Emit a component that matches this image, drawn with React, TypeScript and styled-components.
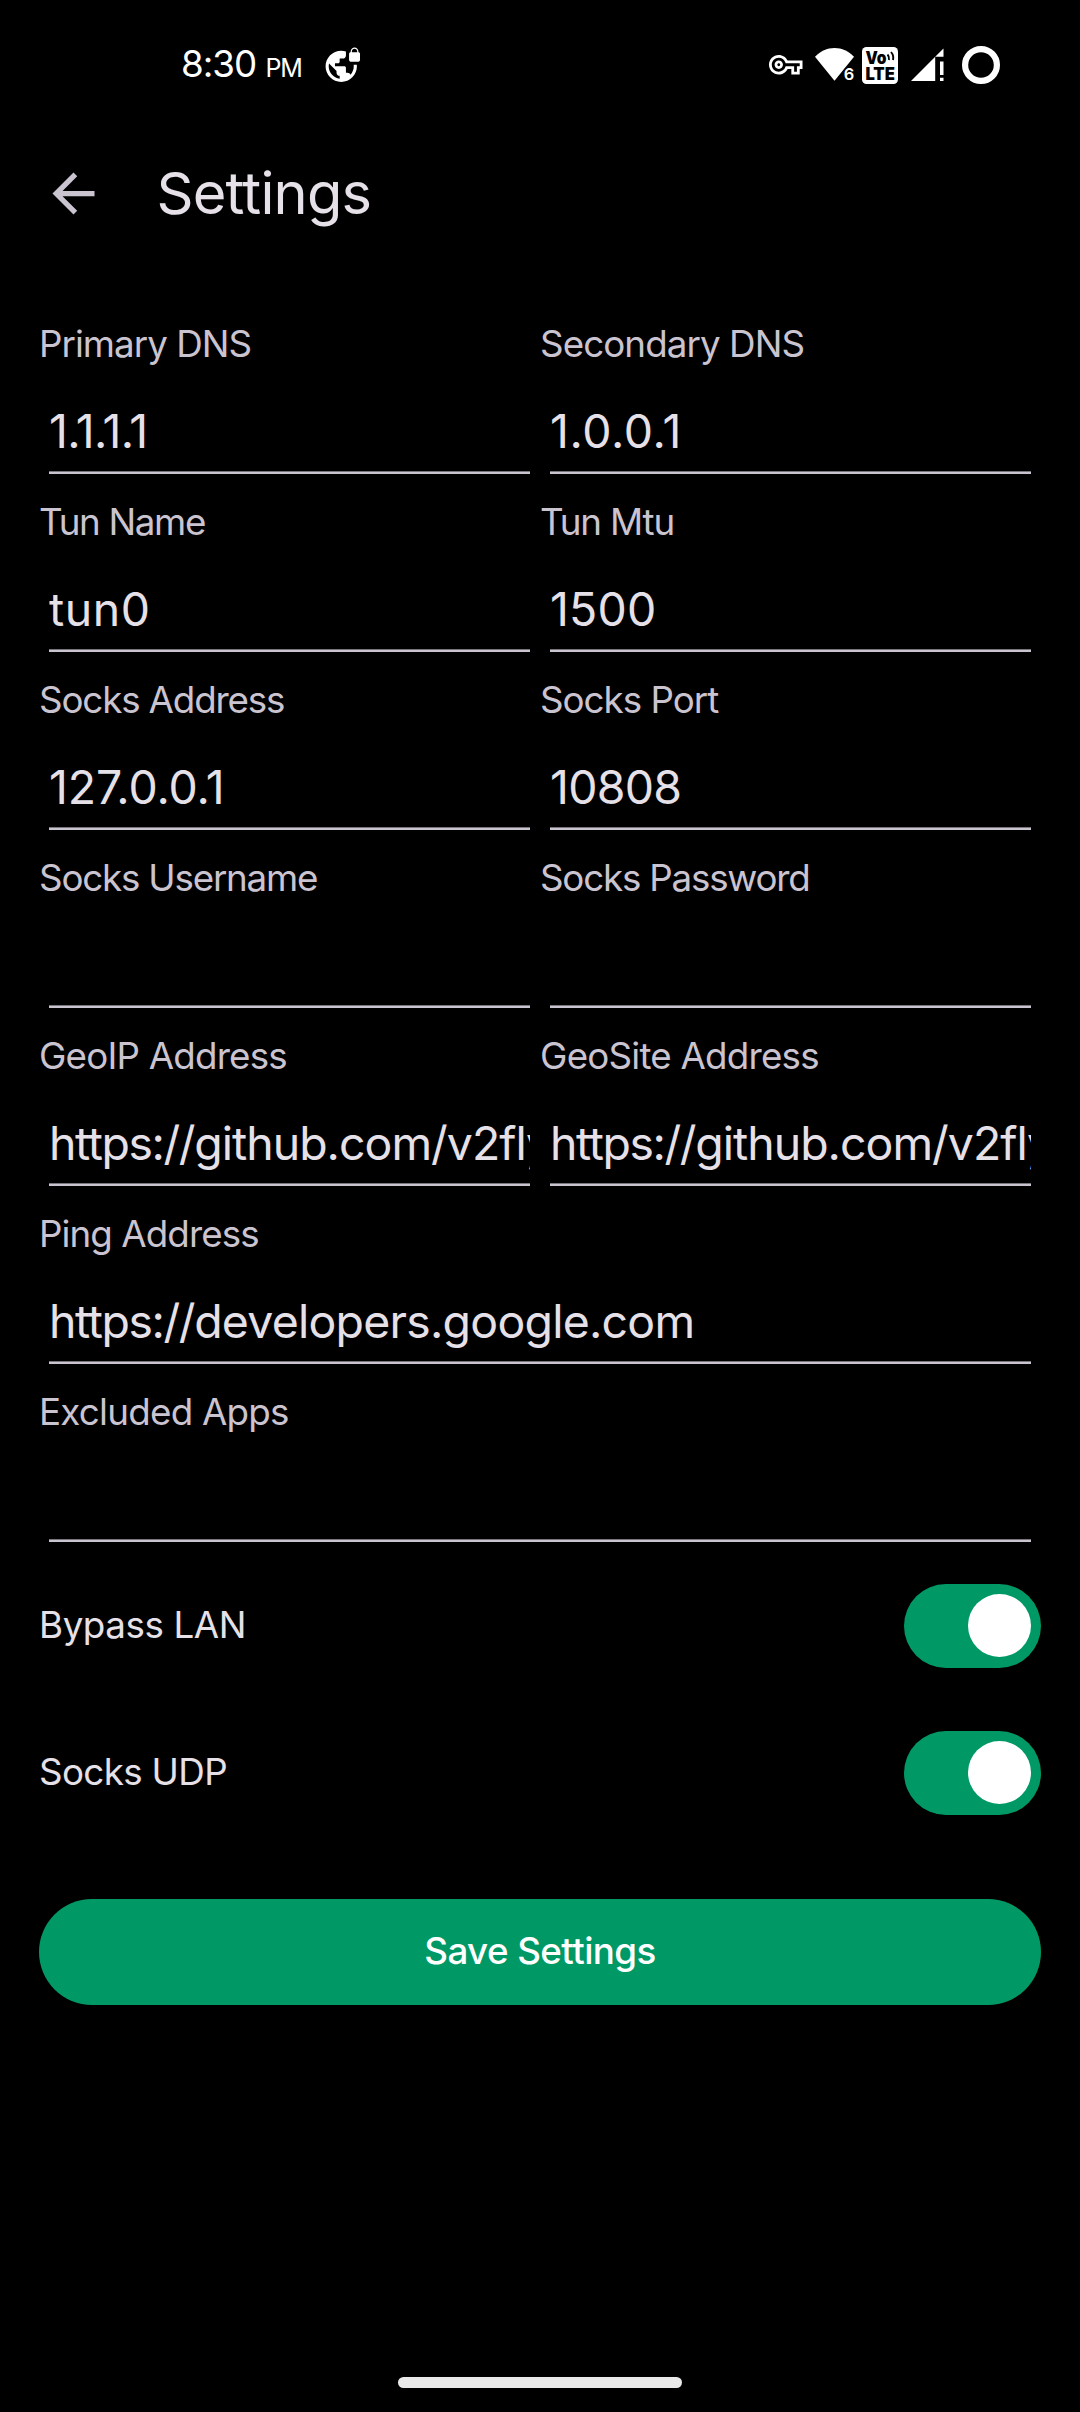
import React, { useState } from "react";
import styled, { createGlobalStyle } from "styled-components";

const GlobalStyle = createGlobalStyle`
  *, *::before, *::after { box-sizing: border-box; }
  body { margin: 0; background: #000; }
`;

const Screen = styled.div`
  display: flex;
  flex-direction: column;
  width: 1080px;
  height: 2412px;
  background: #000;
  color: #e6e0e9;
  font-family: Inter, Roboto, sans-serif;
  overflow: hidden;
`;

const StatusBar = styled.header`
  display: flex;
  align-items: center;
  justify-content: space-between;
  height: 130px;
  padding: 0 80px 0 181px;
  color: #fff;
`;

const StatusGroup = styled.div`
  display: flex;
  align-items: center;
`;

const Clock = styled.div`
  display: flex;
  align-items: baseline;
  padding-top: 2px;
  line-height: 44px;
  white-space: nowrap;
`;

const Time = styled.span`
  width: 84.5px;
  font-size: 36.75px;
  letter-spacing: -1px;
`;

const Meridiem = styled.span`
  width: 58px;
  font-size: 25px;
  letter-spacing: -1.3px;
`;

const Glyph = styled.svg<{ $gap?: number }>`
  display: block;
  flex: none;
  fill: currentColor;
  margin-left: ${p => p.$gap ?? 0}px;
`;

const AppBar = styled.div`
  display: flex;
  align-items: center;
  height: 126px;
  padding-left: 42px;
`;

const BackButton = styled.button`
  display: flex;
  padding: 0;
  border: 0;
  background: none;
  color: #cac4d0;
`;

const Title = styled.h1`
  margin: 0 0 1px 51.5px;
  font-size: 57.75px;
  line-height: 70px;
  font-weight: 400;
  letter-spacing: -0.8px;
`;

const Form = styled.main`
  display: flex;
  flex-direction: column;
  flex: 1;
  padding: 63px 39px 0;
`;

const FieldGrid = styled.div`
  display: grid;
  grid-template-columns: 1fr 1fr;
  grid-auto-rows: 178px;
`;

const FieldBox = styled.div<{ $wide?: boolean }>`
  display: flex;
  flex-direction: column;
  min-width: 0;
  grid-column: ${p => (p.$wide ? "1 / -1" : "auto")};
`;

const Label = styled.div<{ $track: number }>`
  height: 50px;
  font-size: 36.75px;
  line-height: 49px;
  letter-spacing: ${p => p.$track - 0.06}px;
  color: #cac4d0;
  white-space: nowrap;
`;

const Value = styled.div<{ $track: number }>`
  height: 72px;
  margin: 30px 10px 0;
  font-size: 46.4px;
  line-height: 64px;
  letter-spacing: ${p => p.$track}px;
  white-space: nowrap;
  overflow: hidden;
`;

const Scheme = styled.span`
  letter-spacing: -1.4px;
`;

const Underline = styled.div`
  height: 3px;
  margin: 0 10px;
  background: linear-gradient(#79757d 33%, #cac4d0 34%);
`;

const Toggles = styled.div`
  display: flex;
  flex-direction: column;
  gap: 63px;
  margin-top: 19px;
`;

const ToggleRow = styled.div`
  display: flex;
  align-items: center;
  justify-content: space-between;
  height: 84px;
`;

const ToggleLabel = styled.span<{ $track: number }>`
  margin-bottom: 3px;
  font-size: 36.75px;
  line-height: 50px;
  letter-spacing: ${p => p.$track}px;
`;

const Switch = styled.button<{ $on: boolean }>`
  display: flex;
  align-items: center;
  justify-content: ${p => (p.$on ? "flex-end" : "flex-start")};
  width: 137px;
  height: 84px;
  padding: 0 10.5px;
  border: 0;
  border-radius: 42px;
  background: ${p => (p.$on ? "#009966" : "#49454f")};
`;

const Knob = styled.span`
  width: 63px;
  height: 63px;
  margin-bottom: 1px;
  border-radius: 50%;
  background: #fff;
`;

const SaveButton = styled.button`
  height: 106px;
  margin-top: 84px;
  padding: 0 0 3px;
  border: 0;
  border-radius: 53px;
  background: #009966;
  color: #fff;
  font-family: inherit;
  font-size: 36.75px;
  font-weight: 500;
  line-height: 50px;
  letter-spacing: -0.58px;
`;

const HomeBar = styled.div`
  width: 284px;
  height: 10.5px;
  margin: 0 auto 24.5px;
  border-radius: 6px;
  background: #e9e9e9;
`;

type FieldProps = { label: string; value: string; labelTrack: number; valueTrack?: number; wide?: boolean };

const fields: FieldProps[] = [
  { label: "Primary DNS", labelTrack: -0.92, value: "1.1.1.1", valueTrack: -0.73 },
  { label: "Secondary DNS", labelTrack: -0.86, value: "1.0.0.1", valueTrack: 0.62 },
  { label: "Tun Name", labelTrack: -1.28, value: "tun0", valueTrack: 0.6 },
  { label: "Tun Mtu", labelTrack: -1.13, value: "1500", valueTrack: 0.22 },
  { label: "Socks Address", labelTrack: -1.09, value: "127.0.0.1", valueTrack: -0.1 },
  { label: "Socks Port", labelTrack: -0.95, value: "10808", valueTrack: -0.7 },
  { label: "Socks Username", labelTrack: -1.14, value: "" },
  { label: "Socks Password", labelTrack: -1.15, value: "" },
  { label: "GeoIP Address", labelTrack: -0.75, value: "https://github.com/v2fly", valueTrack: -0.95 },
  { label: "GeoSite Address", labelTrack: -0.73, value: "https://github.com/v2fly", valueTrack: -0.95 },
  { label: "Ping Address", labelTrack: -0.87, value: "https://developers.google.com", valueTrack: -0.74, wide: true },
  { label: "Excluded Apps", labelTrack: -0.69, value: "", wide: true },
];

const SCHEME = "https://";

function Field({ label, value, labelTrack, valueTrack = 0, wide }: FieldProps) {
  const isUrl = value.startsWith(SCHEME);
  return (
    <FieldBox $wide={wide}>
      <Label $track={labelTrack}>{label}</Label>
      <Value $track={valueTrack}>
        {isUrl && <Scheme>{SCHEME}</Scheme>}
        {isUrl ? value.slice(SCHEME.length) : value}
      </Value>
      <Underline />
    </FieldBox>
  );
}

function Toggle({ label, track }: { label: string; track: number }) {
  const [on, setOn] = useState(true);
  return (
    <ToggleRow>
      <ToggleLabel $track={track}>{label}</ToggleLabel>
      <Switch $on={on} role="switch" aria-checked={on} aria-label={label} onClick={() => setOn(!on)}>
        <Knob />
      </Switch>
    </ToggleRow>
  );
}

function StatusIcons() {
  return (
    <StatusGroup>
      <Glyph width="33.5" height="33.5" viewBox="0 0 24 24">
        <path d="M22 19h-6v-4h-2.68c-1.14 2.42-3.6 4-6.32 4-3.86 0-7-3.14-7-7s3.14-7 7-7c2.72 0 5.17 1.58 6.32 4H24v6h-2v4zm-4-2h2v-4h2v-2H11.94l-.23-.67C11.01 8.34 9.11 7 7 7c-2.76 0-5 2.24-5 5s2.24 5 5 5c2.11 0 4.01-1.34 4.71-3.33l.23-.67H18v4zM7 15c-1.65 0-3-1.35-3-3s1.35-3 3-3 3 1.35 3 3-1.35 3-3 3zm0-4c-.55 0-1 .45-1 1s.45 1 1 1 1-.45 1-1-.45-1-1-1z" />
      </Glyph>
      <Glyph $gap={12.5} width="40" height="36" viewBox="0 0 40 36">
        <path d="M0 9.8C5.5 4.2 12 1 19.5 1S33.5 4.2 39 9.8L19.5 33.8Z" />
        <text
          x="28.7"
          y="33.2"
          fontSize="16.5"
          fontWeight="600"
          stroke="#000"
          strokeWidth="3"
          paintOrder="stroke"
          textLength="10.5"
          lengthAdjust="spacingAndGlyphs"
        >
          6
        </text>
      </Glyph>
      <Glyph $gap={7} width="36" height="37" viewBox="0 0 36 37">
        <rect width="36" height="37" rx="4.5" />
        <g fill="#000" fontWeight="900">
          <text x="3.6" y="17" fontSize="17" textLength="21" lengthAdjust="spacingAndGlyphs">Vo</text>
          <text x="3.4" y="33.3" fontSize="17.5" textLength="29.5" lengthAdjust="spacingAndGlyphs">LTE</text>
        </g>
        <path d="M25.5 7.5Q27.5 9.500 27 13M29 5Q32 8.500 31 13" fill="none" stroke="#000" strokeWidth="1.9" />
      </Glyph>
      <Glyph $gap={12.5} width="33" height="34" viewBox="0 0 33 34">
        <path d="M0 33L24.200 8.800V33ZM24.200 8.800L32.500 .5V8.800ZM29 13.500H32.500V27H29ZM29 29.700H32.500V33H29Z" />
      </Glyph>
      <Glyph $gap={18.5} width="38" height="38" viewBox="0 0 38 38">
        <circle cx="19" cy="19" r="15.9" fill="none" stroke="currentColor" strokeWidth="6.2" />
      </Glyph>
    </StatusGroup>
  );
}

export default function App() {
  return (
    <Screen>
      <GlobalStyle />
      <StatusBar>
        <StatusGroup>
          <Clock>
            <Time>8:30</Time>
            <Meridiem>PM</Meridiem>
          </Clock>
          <Glyph width="37.6" height="37.6" viewBox="0 0 24 24">
            <path d="M22 4v-.5C22 2.12 20.88 1 19.5 1S17 2.12 17 3.5V4c-.55 0-1 .45-1 1v4c0 .55.45 1 1 1h5c.55 0 1-.45 1-1V5c0-.55-.45-1-1-1zm-.8 0h-3.4v-.5c0-.94.76-1.7 1.7-1.7s1.7.76 1.7 1.7V4zm-2.28 8c.04.33.08.66.08 1 0 2.08-.8 3.97-2.1 5.39-.26-.81-1-1.39-1.9-1.39h-1v-3c0-.55-.45-1-1-1H7v-2h2c.55 0 1-.45 1-1V8h2c1.1 0 2-.9 2-2V3.46c-.95-.3-1.95-.46-3-.46C5.48 3 1 7.48 1 13s4.48 10 10 10 10-4.48 10-10c0-.34-.02-.67-.05-1h-2.03zM10 20.93c-3.95-.49-7-3.85-7-7.93 0-.62.08-1.21.21-1.79L8 16v1c0 1.1.9 2 2 2v1.93z" />
          </Glyph>
        </StatusGroup>
        <StatusIcons />
      </StatusBar>
      <AppBar>
        <BackButton aria-label="Back">
          <Glyph width="63" height="63" viewBox="0 0 24 24">
            <path d="M20 11H7.83l5.59-5.59L12 4l-8 8 8 8 1.41-1.41L7.83 13H20v-2z" />
          </Glyph>
        </BackButton>
        <Title>Settings</Title>
      </AppBar>
      <Form>
        <FieldGrid>
          {fields.map(f => (
            <Field key={f.label} {...f} />
          ))}
        </FieldGrid>
        <Toggles>
          <Toggle label="Bypass LAN" track={-0.42} />
          <Toggle label="Socks UDP" track={-0.65} />
        </Toggles>
        <SaveButton>Save Settings</SaveButton>
      </Form>
      <HomeBar />
    </Screen>
  );
}
